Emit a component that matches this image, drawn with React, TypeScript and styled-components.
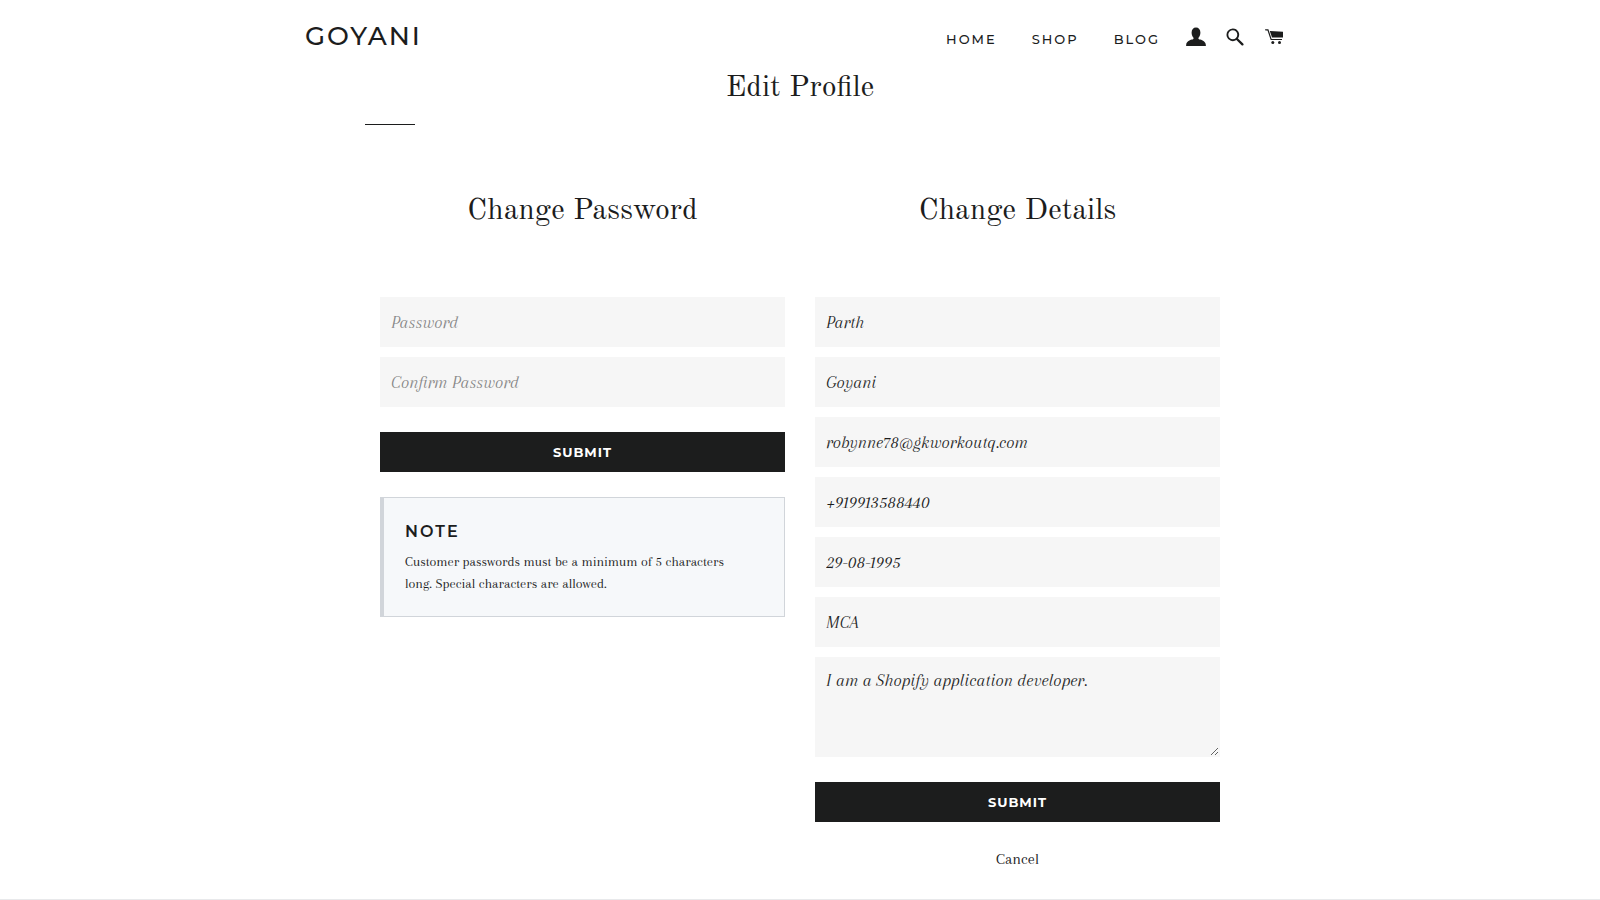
import React from "react";
import styled, { createGlobalStyle } from "styled-components";

const ink = "#1c1d1d";
const sans = `Montserrat, Inter, "Liberation Sans", sans-serif`;
const display = `"Old Standard TT", "Liberation Serif", serif`;
const serif = `Arapey, "Liberation Serif", serif`;

const GlobalStyle = createGlobalStyle`
  *, *::before, *::after { box-sizing: border-box; }
  body {
    margin: 0;
    background: #fff;
    color: ${ink};
    font-family: ${serif};
  }
`;

const Header = styled.header`
  display: flex;
  align-items: center;
  justify-content: space-between;
  max-width: 1050px;
  height: 66px;
  margin: 0 auto;
  padding: 6px 41px 0 30px;
`;

const Logo = styled.a`
  color: ${ink};
  font: 500 26px/32px ${sans};
  letter-spacing: 2px;
  text-decoration: none;
`;

const Nav = styled.nav`
  display: flex;
  align-items: center;
  gap: 35px;
  padding-top: 6px;
`;

const NavLink = styled.a`
  color: ${ink};
  font: 500 13px/20px ${sans};
  letter-spacing: 2px;
  text-decoration: none;
`;

const Tools = styled.div`
  display: flex;
  align-items: center;
  gap: 20px;
  margin-left: -9px;
  padding-bottom: 4px;
`;

const IconButton = styled.button`
  display: flex;
  padding: 0;
  border: 0;
  background: none;
  color: ${ink};
  cursor: pointer;

  svg { display: block; fill: currentColor; }
`;

const Main = styled.main`
  max-width: 870px;
  margin: 0 auto;
`;

const Heading = styled.h2`
  margin: 0;
  padding-top: 2px;
  font: 400 30px/40px ${display};
  text-align: center;
`;

const Rule = styled.hr`
  width: 50px;
  margin: 16px 0 64px;
  border: 0;
  border-top: 1px solid ${ink};
`;

const Columns = styled.div`
  display: grid;
  grid-template-columns: 1fr 1fr;
  gap: 30px;
  padding: 0 15px;
`;

const Form = styled.form`
  display: flex;
  flex-direction: column;
  gap: 10px;
  margin-top: 66px;
`;

const fieldStyle = `
  display: block;
  width: 100%;
  margin: 0;
  border: 1px solid transparent;
  border-radius: 0;
  outline: 0;
  background: #f6f6f6;
  color: ${ink};
  font: italic 400 18px/24px ${serif};
`;

const Field = styled.input`
  ${fieldStyle}
  height: 50px;
  padding: 0 10px;

  &::placeholder { color: #858585; opacity: 1; }
`;

const TextArea = styled.textarea`
  ${fieldStyle}
  height: 100px;
  padding: 10px;
  resize: vertical;
`;

const Submit = styled.button`
  height: 40px;
  margin-top: 15px;
  padding: 0;
  border: 0;
  background: ${ink};
  color: #fff;
  font: 700 13px/20px ${sans};
  letter-spacing: 1px;
  cursor: pointer;
`;

const Note = styled.aside`
  margin-top: 25px;
  padding: 22px 24px 21px 21px;
  border: 1px solid #d1d5da;
  border-left-width: 4px;
  background: #f6f8fa;
`;

const NoteTitle = styled.h3`
  margin: 0 0 7px;
  font: 600 16px/24px ${sans};
  letter-spacing: 2px;
`;

const NoteText = styled.p`
  max-width: 340px;
  margin: 0;
  font: 400 14px/22px ${serif};
`;

const Cancel = styled.a`
  align-self: center;
  margin-top: 17px;
  color: ${ink};
  font: 400 16px/20px ${serif};
  text-decoration: none;
`;

const Footer = styled.footer`
  margin-top: 30px;
  border-top: 1px solid #e8e9eb;
`;

const details = [
  { label: "First name", type: "text", value: "Parth" },
  { label: "Last name", type: "text", value: "Goyani" },
  { label: "Email", type: "email", value: "robynne78@gkworkoutq.com" },
  { label: "Phone", type: "tel", value: "+919913588440" },
  { label: "Birth date", type: "text", value: "29-08-1995" },
  { label: "Education", type: "text", value: "MCA" },
];

const PersonIcon = () => (
  <svg width="20" height="20" viewBox="0 0 20 20" aria-hidden="true">
    <path d="M10 .5c2.700 0 4.400 2.100 4.400 5 0 1.900-.6 3.700-1.700 4.900-.3.400-.4 1.100 0 1.500.3.300.8.500 1.500.7 2.600.8 5.300 2.100 5.600 5.200l.1 1.200H.1l.1-1.200c.3-3.100 3-4.400 5.600-5.200.7-.2 1.200-.4 1.500-.7.4-.4.3-1.100 0-1.500C6.200 9.200 5.600 7.400 5.600 5.500c0-2.900 1.700-5 4.400-5z" />
  </svg>
);

const SearchIcon = () => (
  <svg width="18" height="18" viewBox="0 0 18 18" aria-hidden="true">
    <path fillRule="evenodd" d="M6.800.5a6.300 6.300 0 1 0 3.600 11.500l5.200 5.200a1.100 1.100 0 0 0 1.600-1.600L12 10.400A6.300 6.300 0 0 0 6.800.5zm0 1.800a4.500 4.500 0 1 1 0 9 4.500 4.500 0 0 1 0-9z" />
  </svg>
);

const CartIcon = () => (
  <svg width="20" height="18" viewBox="0 0 20 18" aria-hidden="true">
    <path d="M1 1.200h3.400l3.200 9.700h10.400v1.200H6.700L3.500 2.400H1.400z" />
    <path d="M5.800 2.900l13.200.9v5.800H8z" />
    <circle cx="8.800" cy="14.600" r="1.500" />
    <circle cx="15.500" cy="14.600" r="1.500" />
  </svg>
);

export default function App() {
  return (
    <>
      <GlobalStyle />
      <Header>
        <Logo href="#">GOYANI</Logo>
        <Nav>
          <NavLink href="#home">HOME</NavLink>
          <NavLink href="#shop">SHOP</NavLink>
          <NavLink href="#blog">BLOG</NavLink>
          <Tools>
            <IconButton aria-label="Account"><PersonIcon /></IconButton>
            <IconButton aria-label="Search"><SearchIcon /></IconButton>
            <IconButton aria-label="Cart"><CartIcon /></IconButton>
          </Tools>
        </Nav>
      </Header>
      <Main>
        <Heading as="h1">Edit Profile</Heading>
        <Rule />
        <Columns>
          <section>
            <Heading>Change Password</Heading>
            <Form onSubmit={(e) => e.preventDefault()}>
              <Field type="password" aria-label="Password" placeholder="Password" />
              <Field type="password" aria-label="Confirm Password" placeholder="Confirm Password" />
              <Submit type="submit">SUBMIT</Submit>
            </Form>
            <Note>
              <NoteTitle>NOTE</NoteTitle>
              <NoteText>
                Customer passwords must be a minimum of 5 characters long. Special characters are allowed.
              </NoteText>
            </Note>
          </section>
          <section>
            <Heading>Change Details</Heading>
            <Form onSubmit={(e) => e.preventDefault()}>
              {details.map((d) => (
                <Field key={d.label} type={d.type} aria-label={d.label} defaultValue={d.value} />
              ))}
              <TextArea aria-label="About" defaultValue="I am a Shopify application developer." />
              <Submit type="submit">SUBMIT</Submit>
              <Cancel href="#cancel">Cancel</Cancel>
            </Form>
          </section>
        </Columns>
      </Main>
      <Footer />
    </>
  );
}
